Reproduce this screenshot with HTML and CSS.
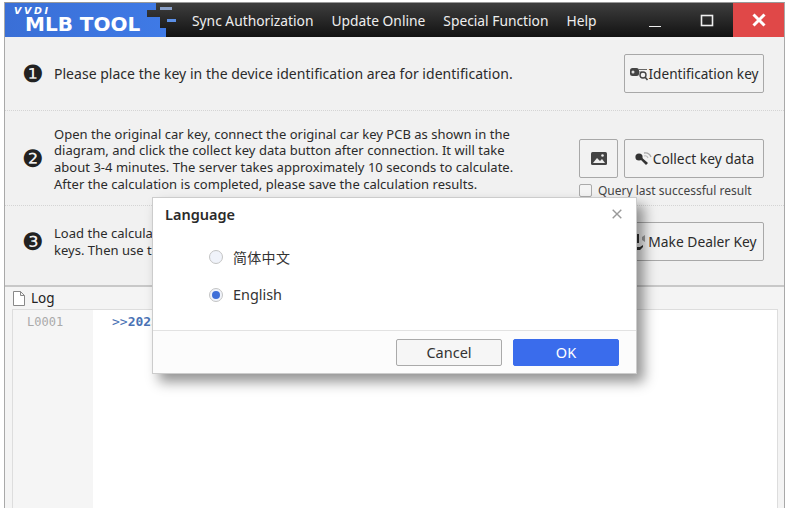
FILE: index.html
```html
<!DOCTYPE html>
<html lang="en">
<head>
<meta charset="utf-8">
<title>VVDI MLB TOOL</title>
<link rel="stylesheet" href="styles.css">
</head>
<body>
<div class="window">
  <header class="titlebar">
    <div class="logo">
      <svg class="logo-shape" width="180" height="34" viewBox="0 0 180 34">
        <defs><linearGradient id="lg" x1="0" y1="0" x2="1" y2="0"><stop offset="0" stop-color="#3a6fd6"/><stop offset="1" stop-color="#3f7ae6"/></linearGradient></defs>
        <path d="M0 0H151V7H142V14H155V25H161V34H0Z" fill="url(#lg)"/>
        <path d="M155 4h12v3h-12z" fill="#8aa0c8"/>
        <path d="M162 16h9v3h-9z" fill="#5b8fe6"/>
      </svg>
      <span class="logo-vvdi">VVDI</span>
      <span class="logo-name">MLB TOOL</span>
    </div>
    <nav class="menu">
      <span>Sync Authorization</span>
      <span>Update Online</span>
      <span>Special Function</span>
      <span>Help</span>
    </nav>
    <div class="winctl">
      <span class="ctl"><svg width="14" height="14" viewBox="0 0 14 14"><path d="M1 14h12" stroke="#eee" stroke-width="2"/></svg></span>
      <span class="ctl"><svg width="14" height="14" viewBox="0 0 14 14"><rect x="1.5" y="2.5" width="11" height="10" fill="none" stroke="#eee" stroke-width="1.6"/></svg></span>
      <span class="ctl close"><svg width="14" height="14" viewBox="0 0 14 14"><path d="M1.5 1.5l11 11M12.5 1.5l-11 11" stroke="#fff" stroke-width="3"/></svg></span>
    </div>
  </header>

  <section class="step step-one">
    <span class="num">❶</span>
    <p class="desc desc-large">Please place the key in the device identification area for identification.</p>
    <div class="actions">
      <button class="btn btn-id"><svg width="19" height="14" viewBox="0 0 19 14"><rect x="0" y="1" width="9" height="8" rx="2.5" fill="#444"/><circle cx="3" cy="5" r="1.5" fill="#ddd"/><path d="M9 2.5h8M9 5h3" stroke="#666"/><circle cx="13" cy="8" r="3" fill="none" stroke="#444" stroke-width="1.4"/><path d="M15 10l2.5 3" stroke="#444" stroke-width="1.6"/></svg>Identification key</button>
    </div>
  </section>

  <section class="step step-two">
    <span class="num">❷</span>
    <p class="desc">Open the original car key, connect the original car key PCB as shown in the<br>diagram, and click the collect key data button after connection. It will take<br>about 3-4 minutes. The server takes approximately 10 seconds to calculate.<br>After the calculation is completed, please save the calculation results.</p>
    <div class="actions-col">
      <div class="btn-row">
        <button class="btn btn-img"><svg width="16" height="13" viewBox="0 0 16 13"><rect width="16" height="13" rx="1.5" fill="#444"/><path d="M2 11l4-5 3 3 2-2 3 4z" fill="#eee"/><circle cx="11.5" cy="3.5" r="1.3" fill="#eee"/></svg></button>
        <button class="btn btn-collect"><svg width="19" height="18" viewBox="0 0 19 18"><circle cx="5" cy="7" r="3.6" fill="#333"/><path d="M6 6l8 7-2 2-7-7z" fill="#333"/><path d="M10 3q5-1 7 4" fill="none" stroke="#aaa" stroke-width="1.4"/><path d="M10 6q3-1 4 2" fill="none" stroke="#bbb" stroke-width="1.2"/></svg>Collect key data</button>
      </div>
      <label class="query"><span class="check"></span>Query last successful result</label>
    </div>
  </section>

  <section class="step step-three">
    <span class="num">❸</span>
    <p class="desc">Load the calculation results, and then use the device to make dealer<br>keys. Then use the dealer key to finish the key learning process.</p>
    <div class="actions">
      <button class="btn btn-dealer"><svg width="17" height="18" viewBox="0 0 17 18"><path d="M5 1h3v9H5zM1 11l2 3h6l3-2v2l-3 3H3l-3-4z" fill="#333"/><path d="M11 4l3-2v7l-3-2z" fill="#999"/></svg>Make Dealer Key</button>
    </div>
  </section>

  <section class="log">
    <div class="log-title">
      <svg width="12" height="15" viewBox="0 0 12 15"><path d="M.5.5h7l4 4v10H.5zM7.5.5v4h4" fill="#fff" stroke="#888"/></svg>
      <span>Log</span>
    </div>
    <div class="code">
      <div class="gutter">L0001</div>
      <div class="lines">&gt;&gt;<b>2023-06-12 10:25:41</b></div>
    </div>
  </section>
</div>

<div class="dialog">
  <div class="dialog-head">
    <span class="dialog-title">Language</span>
    <svg class="dialog-x" width="10" height="10" viewBox="0 0 10 10"><path d="M.7.7l8.6 8.6M9.3.7L.7 9.3" stroke="#999" stroke-width="1.4"/></svg>
  </div>
  <div class="dialog-body">
    <label class="radio"><span class="dot"></span><span class="cjk">简体中文</span></label>
    <label class="radio"><span class="dot on"></span><span>English</span></label>
  </div>
  <div class="dialog-foot">
    <button class="dbtn cancel">Cancel</button>
    <button class="dbtn ok">OK</button>
  </div>
</div>
</body>
</html>
```
FILE: styles.css
```css
* { box-sizing: border-box; }
html, body { margin: 0; height: 100%; }
body {
  width: 800px; height: 508px; overflow: hidden; background: #fff; position: relative;
  font-family: "Noto Sans", "Noto Sans CJK SC", sans-serif; color: #2b2b2b;
  padding: 2px 15px 0 4px;
}
.window {
  height: 506px; background: #f1f1f1; overflow: hidden;
  border-left: 1px solid #a9a9a9; border-right: 1px solid #a9a9a9; border-top: 1px solid #999;
  display: flex; flex-direction: column;
}
.titlebar {
  height: 34px; flex: none; display: flex; align-items: center; position: relative;
  background: linear-gradient(#3e3e3e, #121212);
}
.logo { width: 187px; height: 34px; flex: none; position: relative; color: #fff; }
.logo-shape { position: absolute; left: 0; top: 0; }
.logo-vvdi {
  position: absolute; left: 9px; top: 3px; font: italic 700 9.5px/10px "DejaVu Sans", sans-serif;
  letter-spacing: 2.6px;
}
.logo-name {
  position: absolute; left: 20px; top: 13px; font: 700 20px/17px "DejaVu Sans", sans-serif;
}
.menu { display: flex; gap: 18px; font-size: 13.8px; color: #eee; }
.winctl { margin-left: auto; display: flex; height: 100%; }
.ctl { width: 52px; display: flex; align-items: center; justify-content: center; }
.close { background: #e04848; width: 51px; }
.step { display: flex; align-items: center; padding: 0 20px 0 18px; position: relative; }
.step-one { height: 74px; border-bottom: 1px dotted #d4d4d4; }
.step-two { height: 95px; border-bottom: 1px dotted #d4d4d4; padding-top: 2px; }
.step-three { height: 81px; border-bottom: 2px solid #c8c8c8; padding-bottom: 8px; }
.num { width: 31px; flex: none; font: 24px/24px "DejaVu Sans", sans-serif; color: #222; margin-left: -1px; margin-right: 1px; }
.desc { margin: 0; font-size: 13px; line-height: 16.7px; flex: 1; white-space: nowrap; letter-spacing: .02px; }
.desc-large { font-size: 14px; padding-top: 2px; }
.actions { margin-left: auto; }
.btn {
  height: 39px; background: #f2f2f2; border: 1px solid #a8a8a8; border-radius: 2px;
  font: 13.8px "Noto Sans", sans-serif; color: #2b2b2b; display: flex; align-items: center;
  justify-content: center; padding: 0;
}
.btn-id { width: 140px; font-size: 13.6px; }
.btn-dealer, .btn-collect { width: 140px; }
.btn-img { width: 39px; }
.actions-col { display: flex; flex-direction: column; gap: 5px; margin-top: 18px; }
.btn-row { display: flex; gap: 6px; }
.query { display: flex; align-items: center; gap: 6px; font-size: 12px; color: #444; height: 14px; }
.check { width: 13px; height: 13px; border: 1px solid #aaa; border-radius: 2px; background: #f4f4f4; }
.log { flex: 1; background: #f4f4f4; padding: 0 6px 0 7px; display: flex; flex-direction: column; min-height: 0; }
.log-title { height: 22px; flex: none; display: flex; align-items: center; gap: 6px; font-size: 13.5px; padding-left: 1px; color: #222; }
.code { flex: 1; display: flex; background: #fff; border: 1px solid #ddd; border-bottom: 0; }
.gutter { width: 80px; background: #f5f5f5; padding: 3px 0 0 14px; font: 12px/18px "DejaVu Sans Mono", monospace; color: #aaa; }
.lines { padding: 3px 0 0 19px; font: 13px/18px "DejaVu Sans Mono", monospace; color: #4a73b5; }
.dialog {
  position: absolute; left: 152px; top: 197px; width: 485px; height: 177px; background: #fff;
  border: 1px solid #ccc; box-shadow: 7px 8px 12px rgba(0,0,0,.42);
  display: flex; flex-direction: column;
}
.dialog-head { height: 31px; flex: none; display: flex; align-items: center; justify-content: space-between; padding: 0 14px 0 12px; }
.dialog-title { font-size: 14.5px; font-weight: 600; color: #2a2a2a; }
.dialog-body { flex: 1; display: flex; flex-direction: column; gap: 15px; padding: 16px 0 0 56px; }
.radio { display: flex; align-items: center; gap: 10px; font-size: 14.4px; height: 23px; color: #333; }
.cjk { font-family: "Noto Sans CJK SC", sans-serif; font-size: 14px; letter-spacing: .3px; }
.dot { width: 14px; height: 14px; border-radius: 50%; border: 1px solid #c4c4c4; background: #f0f3fa; position: relative; }
.dot.on::after { content: ""; position: absolute; left: 2px; top: 2px; width: 8px; height: 8px; border-radius: 50%; background: #3f6fd8; }
.dialog-foot { height: 43px; flex: none; border-top: 1px solid #e2e2e2; background: #fcfcfc; display: flex; justify-content: flex-end; align-items: center; gap: 11px; padding: 0 17px 0 0; }
.dbtn { width: 106px; height: 27px; border-radius: 2px; font: 14.5px "Noto Sans", sans-serif; padding: 0; }
.cancel { background: #f6f6f6; border: 1px solid #aaa; color: #333; }
.ok { background: #3a6cec; border: 1px solid #3a6cec; color: #fff; }
```
